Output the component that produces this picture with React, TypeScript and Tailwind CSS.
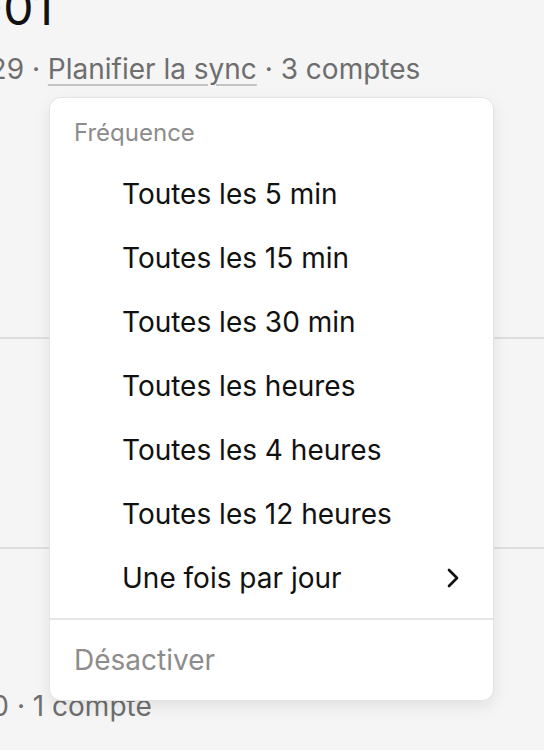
import React from "react";

function Chevron() {
  return (
    <svg width="32" height="32" viewBox="0 0 24 24" fill="none" stroke="#111" strokeWidth="2" strokeLinecap="round" strokeLinejoin="round">
      <path d="m9 18 6-6-6-6" />
    </svg>
  );
}

const items = [
  "Toutes les 5 min",
  "Toutes les 15 min",
  "Toutes les 30 min",
  "Toutes les heures",
  "Toutes les 4 heures",
  "Toutes les 12 heures",
];

export default function App() {
  return (
    <div className="relative h-[750px] w-[544px] overflow-hidden bg-[#f5f5f5] font-['Inter',sans-serif]">
      {/* Row 1 */}
      <div className="flex h-[337px] flex-col">
        <div className="-mt-[20px] flex h-[56px] whitespace-nowrap text-[48px] leading-[56px] text-[#111]">
          <div className="flex w-[53px] shrink-0 justify-end">Rapport 2024-01</div>
        </div>
        <div className="mt-[13px] flex h-[40px] whitespace-nowrap text-[28px] leading-[40px] text-[#6e6e6e]">
          <div className="flex w-[24px] shrink-0 justify-end">Dernière sync 12:29</div>
          <span className="whitespace-pre"> · </span>
          <span className="underline decoration-[#c4c4c4] decoration-2 underline-offset-[5px]">Planifier la sync</span>
          <span className="whitespace-pre"> · 3 comptes</span>
        </div>
      </div>
      <div className="h-[2px] bg-[#dedede]" />
      {/* Row 2 */}
      <div className="h-[208px]" />
      <div className="h-[2px] bg-[#dedede]" />
      {/* Row 3 */}
      <div className="flex flex-col">
        <div className="mt-[137px] flex h-[40px] whitespace-nowrap text-[28px] leading-[40px] text-[#6e6e6e]">
          <div className="flex w-[9px] shrink-0 justify-end">Dernière sync 09:10</div>
          <span className="whitespace-pre"> · 1 compte</span>
        </div>
      </div>

      {/* Dropdown menu */}
      <div className="absolute left-[49px] top-[97px] w-[445px] rounded-[12px] border border-[#e4e4e4] bg-white p-2 shadow-[0_6px_16px_rgba(0,0,0,0.08)]">
        <div className="flex h-[56px] items-center px-4 pb-[2px] text-[24px] text-[#8c8c8c]">Fréquence</div>
        {items.map((t) => (
          <div key={t} className="flex h-[64px] items-center pl-16 pr-4 text-[28px] text-[#111]">
            {t}
          </div>
        ))}
        <div className="flex h-[64px] items-center justify-between pl-16 pr-4 text-[28px] text-[#111]">
          <span>Une fois par jour</span>
          <Chevron />
        </div>
        <div className="-mx-2 my-2 h-[2px] bg-[#e6e6e6]" />
        <div className="flex h-[64px] items-center px-4 text-[28px] text-[#8c8c8c]">Désactiver</div>
      </div>
    </div>
  );
}
